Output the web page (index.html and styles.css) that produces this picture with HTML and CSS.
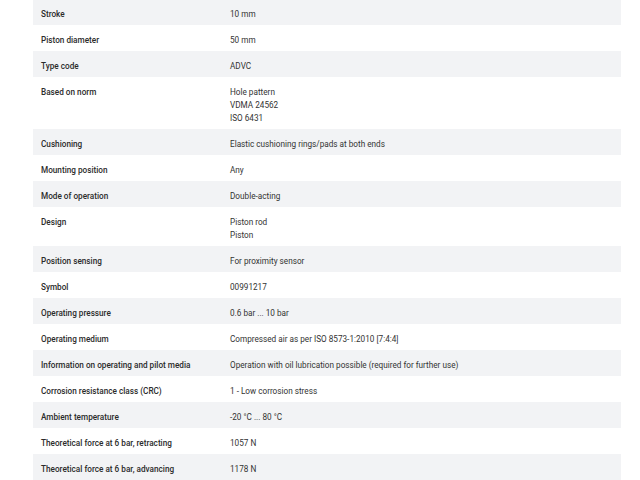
FILE: index.html
```html
<!DOCTYPE html>
<html lang="en">
<head>
  <meta charset="UTF-8">
  <title>Technical data</title>
  <link rel="stylesheet" href="styles.css">
</head>
<body>
  <div class="specs">
    <div class="spec-row"><div class="spec-label">Stroke</div><div class="spec-value">10 mm</div></div>
    <div class="spec-row"><div class="spec-label">Piston diameter</div><div class="spec-value">50 mm</div></div>
    <div class="spec-row"><div class="spec-label">Type code</div><div class="spec-value">ADVC</div></div>
    <div class="spec-row">
      <div class="spec-label">Based on norm</div>
      <div class="spec-value">Hole pattern<br>VDMA 24562<br>ISO 6431</div>
    </div>
    <div class="spec-row"><div class="spec-label">Cushioning</div><div class="spec-value">Elastic cushioning rings/pads at both ends</div></div>
    <div class="spec-row"><div class="spec-label">Mounting position</div><div class="spec-value">Any</div></div>
    <div class="spec-row"><div class="spec-label">Mode of operation</div><div class="spec-value">Double-acting</div></div>
    <div class="spec-row">
      <div class="spec-label">Design</div>
      <div class="spec-value">Piston rod<br>Piston</div>
    </div>
    <div class="spec-row"><div class="spec-label">Position sensing</div><div class="spec-value">For proximity sensor</div></div>
    <div class="spec-row"><div class="spec-label">Symbol</div><div class="spec-value">00991217</div></div>
    <div class="spec-row"><div class="spec-label">Operating pressure</div><div class="spec-value">0.6 bar ... 10 bar</div></div>
    <div class="spec-row"><div class="spec-label">Operating medium</div><div class="spec-value">Compressed air as per ISO 8573-1:2010 [7:4:4]</div></div>
    <div class="spec-row"><div class="spec-label">Information on operating and pilot media</div><div class="spec-value">Operation with oil lubrication possible (required for further use)</div></div>
    <div class="spec-row"><div class="spec-label">Corrosion resistance class (CRC)</div><div class="spec-value">1 - Low corrosion stress</div></div>
    <div class="spec-row"><div class="spec-label">Ambient temperature</div><div class="spec-value">-20 °C ... 80 °C</div></div>
    <div class="spec-row"><div class="spec-label">Theoretical force at 6 bar, retracting</div><div class="spec-value">1057 N</div></div>
    <div class="spec-row"><div class="spec-label">Theoretical force at 6 bar, advancing</div><div class="spec-value">1178 N</div></div>
  </div>
</body>
</html>
```

FILE: styles.css
```css
/* Base styles */
body {
  margin: 0;
  background: #fff;
  color: #333;
  font-family: Roboto, "Liberation Sans", Arial, sans-serif;
  font-size: 8.2px;
  line-height: 13px;
}

/* Spec table */
.specs {
  width: 588px;
  margin: -1px 0 0 33px;
}

.spec-row {
  display: grid;
  grid-template-columns: 189px 1fr;
}

.spec-row:nth-child(odd) {
  background: #f2f3f5;
}

.spec-label,
.spec-value {
  padding: 9px 8px 4px;
}

.spec-label {
  font-weight: 500;
  color: #2b2b2b;
}
```
